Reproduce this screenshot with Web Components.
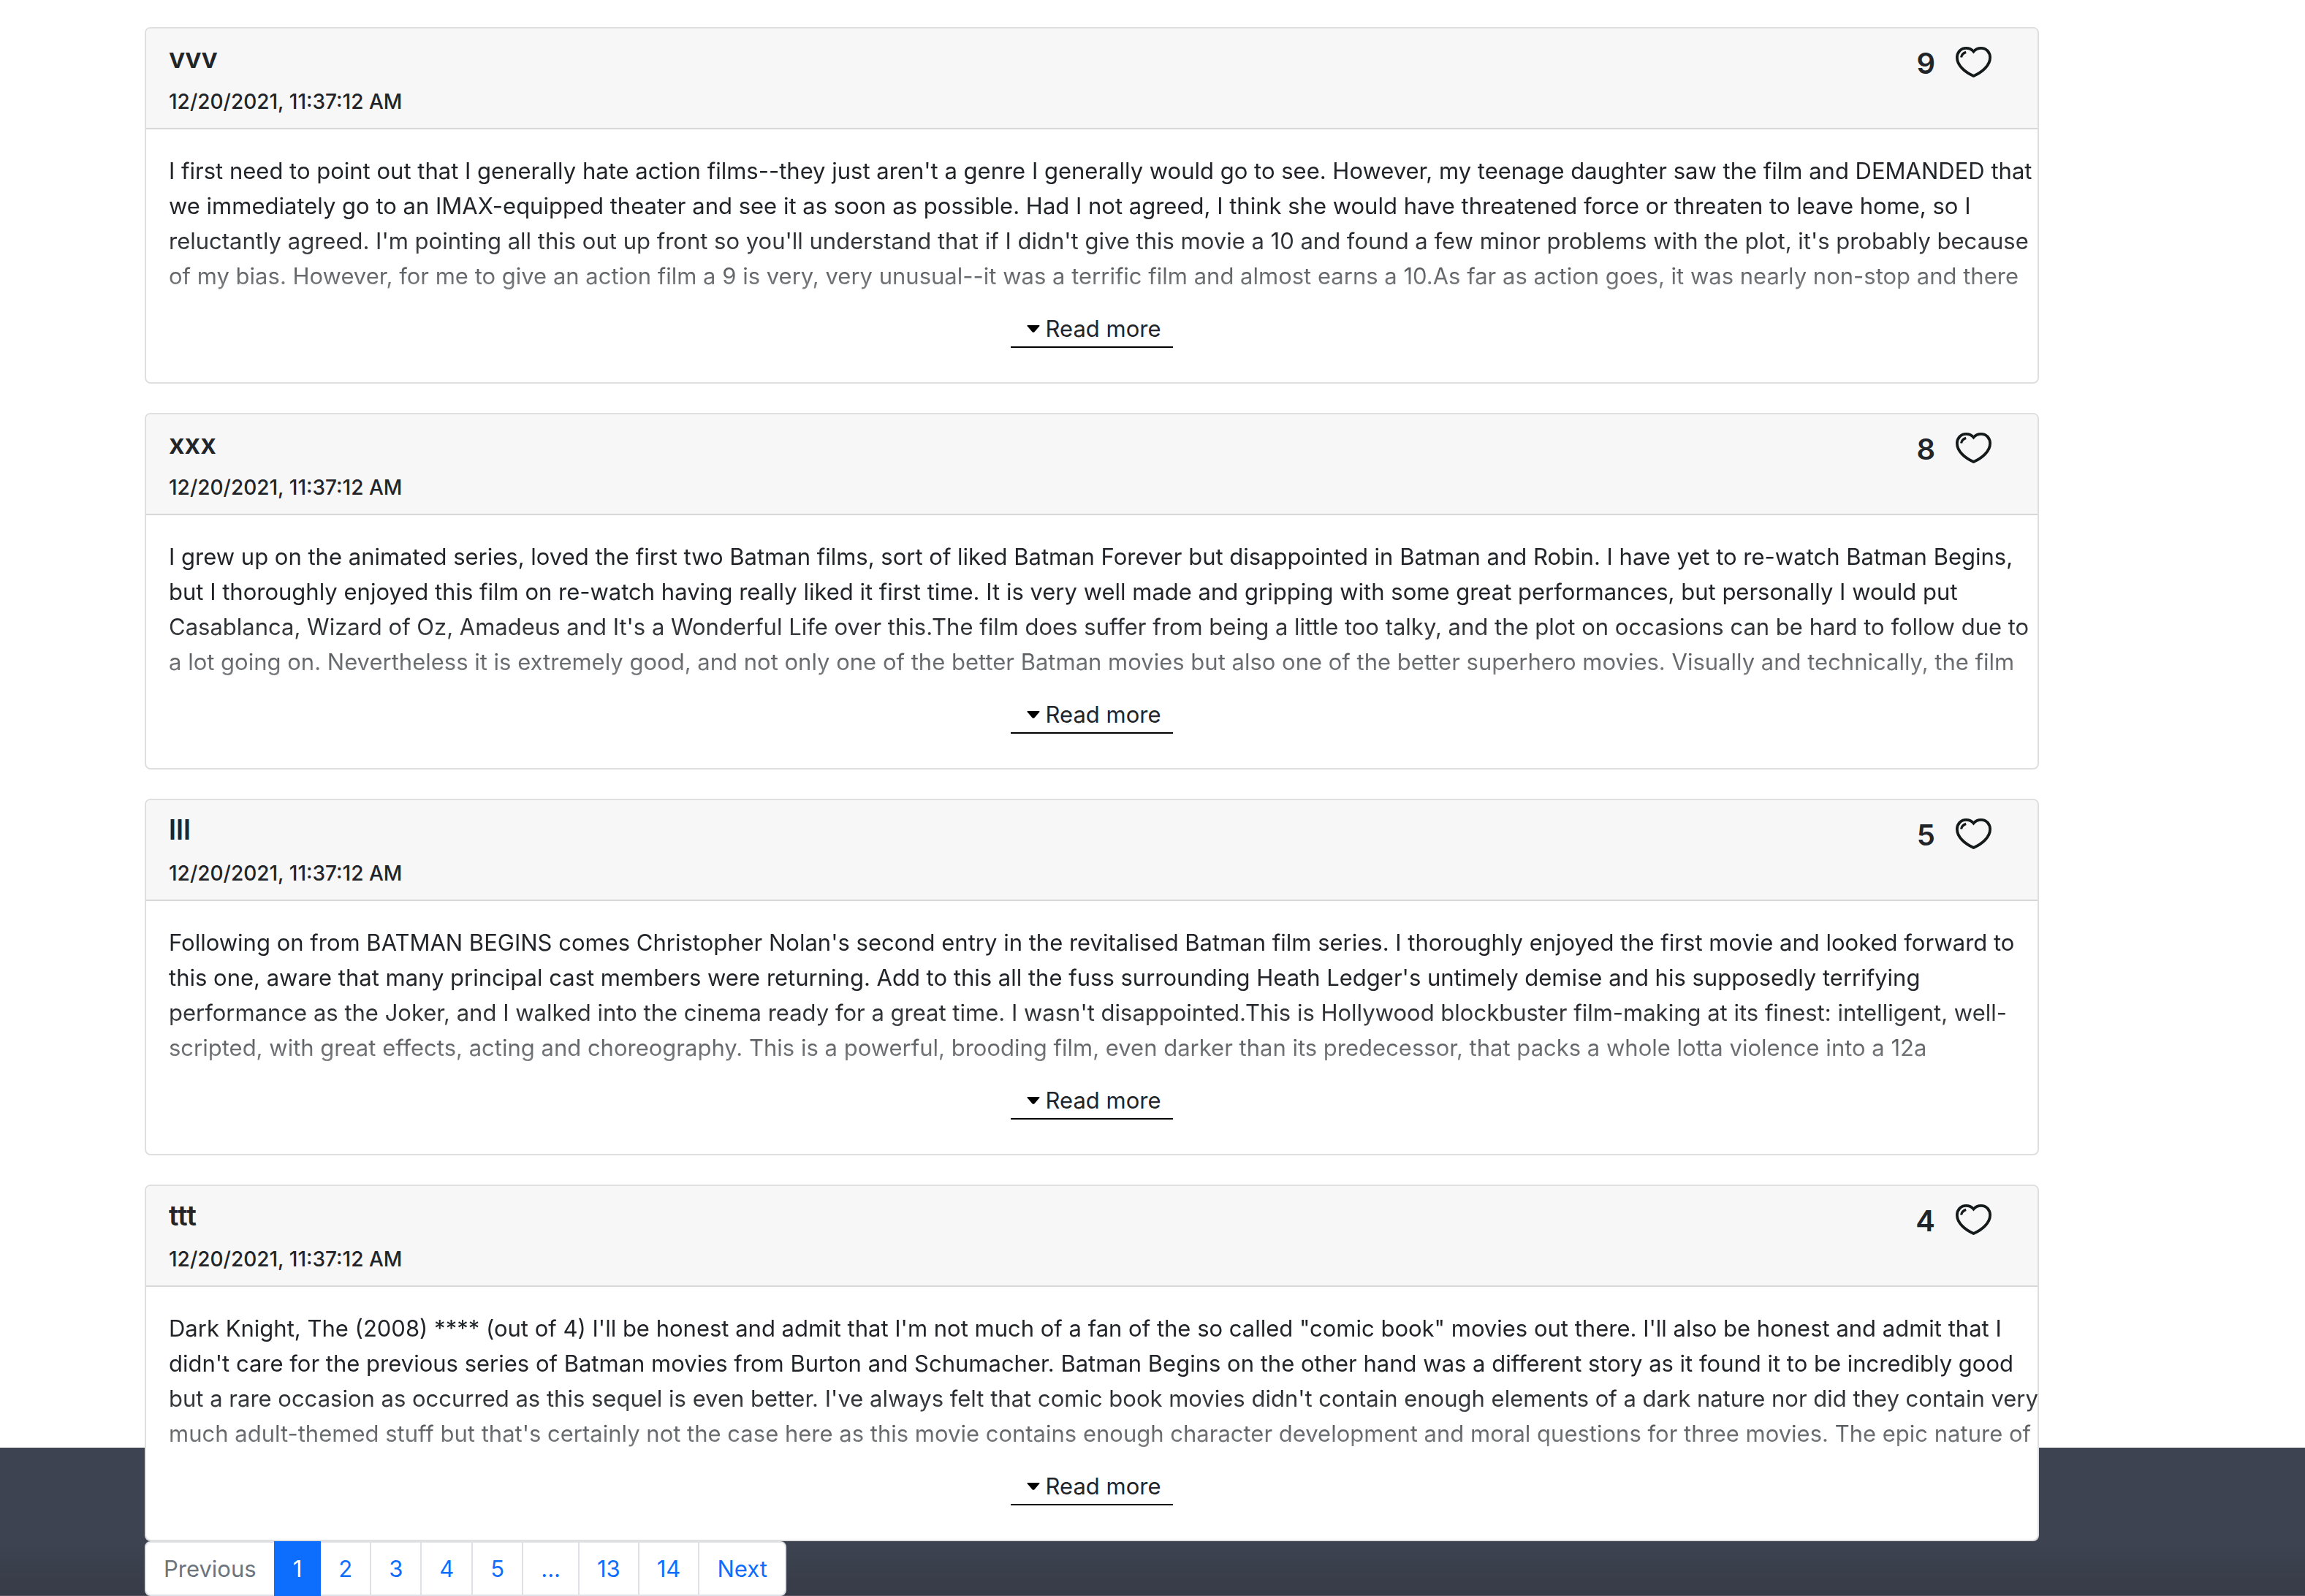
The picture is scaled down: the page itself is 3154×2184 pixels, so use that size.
<!DOCTYPE html>
<html lang="en">
<head>
<meta charset="utf-8">
<title>Reviews</title>
<style>
  html, body { margin: 0; padding: 0; }
  body {
    background: #fff;
    color: #212529;
    font: 400 31px/48px Inter, "Liberation Sans", sans-serif;
  }
</style>
</head>
<body>
<reviews-page>
  <review-card name="vvv" date="12/20/2021, 11:37:12 AM" likes="9">I first need to point out that I generally hate action films--they just aren't a genre I generally would go to see. However, my teenage daughter saw the film and DEMANDED that<br>we immediately go to an IMAX-equipped theater and see it as soon as possible. Had I not agreed, I think she would have threatened force or threaten to leave home, so I<br>reluctantly agreed. I'm pointing all this out up front so you'll understand that if I didn't give this movie a 10 and found a few minor problems with the plot, it's probably because<br>of my bias. However, for me to give an action film a 9 is very, very unusual--it was a terrific film and almost earns a 10.As far as action goes, it was nearly non-stop and there</review-card>
  <review-card name="xxx" date="12/20/2021, 11:37:12 AM" likes="8">I grew up on the animated series, loved the first two Batman films, sort of liked Batman Forever but disappointed in Batman and Robin. I have yet to re-watch Batman Begins,<br>but I thoroughly enjoyed this film on re-watch having really liked it first time. It is very well made and gripping with some great performances, but personally I would put<br>Casablanca, Wizard of Oz, Amadeus and It's a Wonderful Life over this.The film does suffer from being a little too talky, and the plot on occasions can be hard to follow due to<br>a lot going on. Nevertheless it is extremely good, and not only one of the better Batman movies but also one of the better superhero movies. Visually and technically, the film</review-card>
  <review-card name="lll" date="12/20/2021, 11:37:12 AM" likes="5">Following on from BATMAN BEGINS comes Christopher Nolan's second entry in the revitalised Batman film series. I thoroughly enjoyed the first movie and looked forward to<br>this one, aware that many principal cast members were returning. Add to this all the fuss surrounding Heath Ledger's untimely demise and his supposedly terrifying<br>performance as the Joker, and I walked into the cinema ready for a great time. I wasn't disappointed.This is Hollywood blockbuster film-making at its finest: intelligent, well-<br>scripted, with great effects, acting and choreography. This is a powerful, brooding film, even darker than its predecessor, that packs a whole lotta violence into a 12a</review-card>
  <review-card name="ttt" date="12/20/2021, 11:37:12 AM" likes="4">Dark Knight, The (2008) **** (out of 4) I'll be honest and admit that I'm not much of a fan of the so called "comic book" movies out there. I'll also be honest and admit that I<br>didn't care for the previous series of Batman movies from Burton and Schumacher. Batman Begins on the other hand was a different story as it found it to be incredibly good<br>but a rare occasion as occurred as this sequel is even better. I've always felt that comic book movies didn't contain enough elements of a dark nature nor did they contain very<br>much adult-themed stuff but that's certainly not the case here as this movie contains enough character development and moral questions for three movies. The epic nature of</review-card>
  <page-nav slot="nav" current="1" pages="1,2,3,4,5,...,13,14"></page-nav>
</reviews-page>

<template id="page-template">
  <style>
    :host {
      display: grid;
      grid-template-columns: minmax(0, 1fr);
      grid-template-rows: 1fr 203px;
      min-height: 100vh;
    }
    main { grid-area: 1 / 1 / 3 / 2; padding: 37px 364px 0 198px; z-index: 1; }
    .list { display: flex; flex-direction: column; gap: 40px; }
    footer {
      grid-area: 2 / 1 / 3 / 2;
      box-sizing: border-box;
      background: linear-gradient(#3d4350 65%, #373b47);
      border-bottom: 1px solid #565361;
    }
  </style>
  <main>
    <div class="list"><slot></slot></div>
    <slot name="nav"></slot>
  </main>
  <footer></footer>
</template>

<template id="card-template">
  <style>
    :host {
      display: block;
      background: #fff;
      border: 2px solid #dfdfdf;
      border-radius: 8px;
    }
    header {
      display: flex;
      justify-content: space-between;
      align-items: flex-start;
      padding: 16px 63px 16px 31px;
      background: #f7f7f7;
      border-bottom: 2px solid #d8d8d8;
      border-radius: 6px 6px 0 0;
    }
    h5, p { margin: 0; }
    .who { display: flex; flex-direction: column; gap: 16px; }
    h5 { font-size: 38px; line-height: 48px; font-weight: 600; }
    .date { font-size: 28px; line-height: 40px; font-weight: 500; }
    .body {
      display: flex;
      flex-direction: column;
      align-items: center;
      gap: 24px;
      padding: 33px 31px 47px;
    }
    .text {
      align-self: stretch;
      white-space: nowrap;
      -webkit-mask-image: linear-gradient(#000 108px, rgba(0, 0, 0, .55) 192px);
      mask-image: linear-gradient(#000 108px, rgba(0, 0, 0, .55) 192px);
      margin-right: -31px;
    }
    .more {
      display: flex;
      align-items: center;
      gap: 8px;
      padding: 0 17px 0 22px;
      background: none;
      border: 0;
      border-bottom: 2px solid #000;
      color: inherit;
      font: inherit;
    }
    .more svg { display: block; }
  </style>
  <header>
    <div class="who"><h5></h5><p class="date"></p></div>
    <like-button></like-button>
  </header>
  <div class="body">
    <p class="text"><slot></slot></p>
    <button class="more" type="button"><svg width="18" height="10" viewBox="0 0 18 10" aria-hidden="true"><path d="M1 0H17Q18 0 17.300 1.200L10.500 9.200Q9 10.500 7.500 9.200L.7 1.200Q0 0 1 0Z" fill="#000"/></svg>Read more</button>
  </div>
</template>

<template id="like-template">
  <style>
    :host { display: flex; padding-top: 8px; gap: 28px; }
    output { font-size: 40px; line-height: 48px; font-weight: 600; }
    button { display: block; height: 48px; padding: 0; border: 0; background: none; }
    svg { display: block; }
  </style>
  <output></output>
  <button type="button" aria-label="Like">
    <svg width="49" height="46" viewBox="0 0 49 46" fill="none" stroke="#141a1a">
      <path d="M24.500 6.600C21.700 3.200 18 1.900 14.200 1.900C7 1.900 1.900 7.600 1.900 14.800C1.900 25.500 12.500 34.500 24.500 40C36.500 34.500 47.100 25.500 47.100 14.800C47.100 7.600 42 1.900 34.800 1.900C31 1.900 27.300 3.200 24.500 6.600Z" stroke-width="3.800"/>
      <path d="M7.600 14.600C8.200 11 10.500 8.500 14.200 7.400" stroke-width="3.200"/>
    </svg>
  </button>
</template>

<template id="nav-template">
  <style>
    :host { display: block; }
    ul { display: flex; margin: 0; padding: 0; list-style: none; }
    li + li { margin-left: -2px; }
    a {
      display: block;
      padding: 12px 24px 11px;
      line-height: 48px;
      background: #fff;
      border: 2px solid #dee2e6;
      color: #0d6efd;
      text-decoration: none;
    }
    li:first-child a { border-radius: 8px 0 0 8px; }
    li:last-child a { border-radius: 0 8px 8px 0; }
    .disabled a { color: #6c757d; }
    .active { position: relative; z-index: 1; }
    .active a { background: #0d6efd; border-color: #0d6efd; color: #fff; }
  </style>
  <nav aria-label="Pages"><ul></ul></nav>
</template>

<script>
  const mount = (host, id) => {
    const root = host.attachShadow({ mode: 'open' });
    root.append(document.getElementById(id).content.cloneNode(true));
    return root;
  };

  class ReviewsPage extends HTMLElement {
    constructor() { super(); mount(this, 'page-template'); }
  }

  class LikeButton extends HTMLElement {
    static observedAttributes = ['count'];
    constructor() { super(); mount(this, 'like-template'); }
    attributeChangedCallback(name, old, value) {
      this.shadowRoot.querySelector('output').textContent = value;
    }
  }

  class ReviewCard extends HTMLElement {
    constructor() { super(); mount(this, 'card-template'); }
    connectedCallback() {
      const root = this.shadowRoot;
      root.querySelector('h5').textContent = this.getAttribute('name');
      root.querySelector('.date').textContent = this.getAttribute('date');
      root.querySelector('like-button').setAttribute('count', this.getAttribute('likes'));
    }
  }

  class PageNav extends HTMLElement {
    constructor() { super(); mount(this, 'nav-template'); }
    connectedCallback() {
      const list = this.shadowRoot.querySelector('ul');
      const current = this.getAttribute('current');
      const add = (text, state) => {
        const item = document.createElement('li');
        const link = document.createElement('a');
        link.href = '#';
        link.textContent = text;
        if (state) item.className = state;
        item.append(link);
        list.append(item);
      };
      add('Previous', 'disabled');
      for (const page of this.getAttribute('pages').split(',')) add(page, page === current ? 'active' : '');
      add('Next', '');
    }
  }

  customElements.define('reviews-page', ReviewsPage);
  customElements.define('like-button', LikeButton);
  customElements.define('review-card', ReviewCard);
  customElements.define('page-nav', PageNav);
</script>
</body>
</html>
